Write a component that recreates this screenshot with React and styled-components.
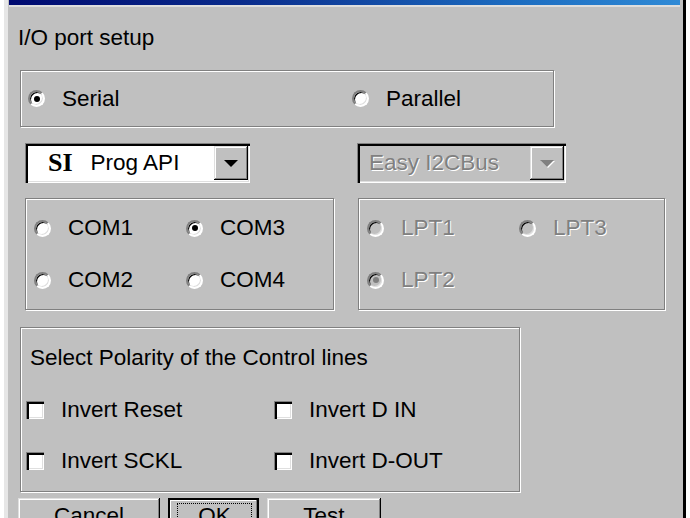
import React from 'react';
import styled, { createGlobalStyle } from 'styled-components';

const GlobalStyle = createGlobalStyle`
  html, body {
    margin: 0;
    padding: 0;
    background: #fff;
  }
  body {
    font-family: "Liberation Sans", Arial, sans-serif;
    font-size: 22.5px;
    color: #000;
  }
`;

const raised = `
  box-shadow: inset -1px -1px #000, inset 1px 1px #dfdfdf,
    inset -2px -2px #808080, inset 2px 2px #fff;
`;

const sunken = `
  box-shadow: inset 1px 1px #808080, inset 3px 3px #000,
    inset -1px -1px #fff, inset -2px -2px #dfdfdf;
`;

const Window = styled.div`
  box-sizing: border-box;
  width: 682px;
  height: 518px;
  margin-left: 4px;
  background: #c0c0c0;
  border-left: 4px solid #e6e6e6;
  border-right: 3px solid #000;
  display: flex;
  flex-direction: column;
  overflow: hidden;
`;

const TitleBar = styled.div`
  flex: none;
  height: 5px;
  margin: 0 3px 0 1px;
  background: linear-gradient(90deg, #000a70 0%, #0a2c8c 35%, #1c6cc0 75%, #2f8ad6 100%);
  border-bottom: 2px solid #dedede;
`;

const Body = styled.div`
  flex: none;
  padding-left: 10px;
  display: flex;
  flex-direction: column;
  align-items: flex-start;
`;

const Caption = styled.div`
  line-height: 26px;
  margin-top: 18px;
  white-space: nowrap;
`;

const Group = styled.div`
  box-sizing: border-box;
  border: 1px solid #808080;
  box-shadow: inset 1px 1px #fff, 1px 1px #fff;
`;

const ModeGroup = styled(Group)`
  width: 534px;
  height: 57px;
  margin: 19px 0 0 2px;
  padding-left: 7px;
  display: grid;
  grid-template-columns: 324px 1fr;
  align-items: center;
`;

const PortArea = styled.div`
  display: grid;
  grid-template-columns: 309px 307px;
  column-gap: 24px;
  row-gap: 15px;
  margin: 16px 0 0 7px;
`;

const Combo = styled.div`
  box-sizing: border-box;
  width: ${p => p.$width}px;
  height: 40px;
  margin-left: ${p => (p.$disabled ? -1 : 0)}px;
  padding: 3px 2px 3px 3px;
  display: flex;
  align-items: center;
  background: ${p => (p.$disabled ? '#c0c0c0' : '#fff')};
  ${sunken}
`;

const Logo = styled.span`
  font-family: "Liberation Serif", "Times New Roman", serif;
  font-weight: bold;
  font-size: 26px;
  margin-left: 20px;
  margin-right: 18px;
`;

const ComboText = styled.span`
  white-space: nowrap;
  padding-left: ${p => (p.$disabled ? 9 : 0)}px;
  color: ${p => (p.$disabled ? '#808080' : '#000')};
  text-shadow: ${p => (p.$disabled ? '1px 1px #fff' : 'none')};
`;

const DropButton = styled.div`
  box-sizing: border-box;
  width: 34px;
  height: 100%;
  margin-left: auto;
  background: #c0c0c0;
  display: flex;
  align-items: center;
  justify-content: center;
  ${raised}
`;

const Arrow = styled.span`
  width: 0;
  height: 0;
  border-left: 7px solid transparent;
  border-right: 7px solid transparent;
  border-top: 7px solid ${p => (p.$disabled ? '#808080' : '#000')};
  filter: ${p => (p.$disabled ? 'drop-shadow(1px 1px 0 #fff)' : 'none')};
`;

const PortGroup = styled(Group)`
  height: 112px;
  padding-left: 8px;
  display: grid;
  grid-template-columns: 152px 1fr;
  grid-auto-rows: 52px;
  align-content: center;
  align-items: center;
`;

const Choice = styled.label`
  display: flex;
  align-items: center;
  gap: 17px;
  line-height: 26px;
  white-space: nowrap;
  color: ${p => (p.$disabled ? '#808080' : '#000')};
  text-shadow: ${p => (p.$disabled ? '1px 1px #fff' : 'none')};
`;

const RadioMark = styled.span`
  box-sizing: border-box;
  flex: none;
  width: 17px;
  height: 17px;
  border-radius: 50%;
  border: 2px solid;
  border-color: #808080 #fff #fff #808080;
  box-shadow: inset 1px 1px #000, inset -1px -1px #dfdfdf;
  background: ${p => (p.$disabled ? '#c0c0c0' : '#fff')};
  display: flex;
  align-items: center;
  justify-content: center;

  &::after {
    content: '';
    display: ${p => (p.$checked ? 'block' : 'none')};
    width: 6px;
    height: 6px;
    border-radius: 50%;
    background: ${p => (p.$disabled ? '#808080' : '#000')};
  }
`;

const PolarityGroup = styled(Group)`
  width: 500px;
  height: 165px;
  margin: 17px 0 0 2px;
  padding: 17px 0 0 5px;
  display: flex;
  flex-direction: column;
`;

const PolarityCaption = styled.div`
  line-height: 26px;
  margin-left: 4px;
  white-space: nowrap;
`;

const CheckGrid = styled.div`
  display: grid;
  grid-template-columns: 248px auto;
  grid-auto-rows: 51px;
  align-items: center;
  margin-top: 13px;
`;

const CheckMark = styled.span`
  box-sizing: border-box;
  flex: none;
  width: 18px;
  height: 18px;
  background: #fff;
  ${sunken}
`;

const ButtonRow = styled.div`
  display: flex;
  gap: 8px;
  margin-top: 6px;
`;

const Button = styled.button`
  box-sizing: border-box;
  flex: none;
  width: ${p => p.$width}px;
  height: 36px;
  padding: ${p => (p.$default ? '5px 7px 5px 9px' : '0')};
  border: none;
  background: #c0c0c0;
  font: inherit;
  color: #000;
  display: flex;
  align-items: stretch;
  justify-content: center;
  ${p =>
    p.$default
      ? `box-shadow: inset 0 0 0 2px #000, inset -3px -3px #808080, inset 3px 3px #fff;`
      : raised}
`;

const ButtonLabel = styled.span`
  flex: 1;
  display: flex;
  align-items: center;
  justify-content: center;
  border: 1px dotted ${p => (p.$focused ? '#000' : 'transparent')};
`;

function Radio({ label, checked, disabled }) {
  return (
    <Choice $disabled={disabled}>
      <RadioMark $checked={checked} $disabled={disabled} />
      {label}
    </Choice>
  );
}

function Check({ label }) {
  return (
    <Choice>
      <CheckMark />
      {label}
    </Choice>
  );
}

export default function App() {
  return (
    <>
      <GlobalStyle />
      <Window>
        <TitleBar />
        <Body>
          <Caption>I/O port setup</Caption>

          <ModeGroup>
            <Radio label="Serial" checked />
            <Radio label="Parallel" />
          </ModeGroup>

          <PortArea>
            <Combo $width={225}>
              <Logo>SI</Logo>
              <ComboText>Prog API</ComboText>
              <DropButton>
                <Arrow />
              </DropButton>
            </Combo>
            <Combo $width={209} $disabled>
              <ComboText $disabled>Easy I2CBus</ComboText>
              <DropButton>
                <Arrow $disabled />
              </DropButton>
            </Combo>

            <PortGroup>
              <Radio label="COM1" />
              <Radio label="COM3" checked />
              <Radio label="COM2" />
              <Radio label="COM4" />
            </PortGroup>
            <PortGroup>
              <Radio label="LPT1" disabled />
              <Radio label="LPT3" disabled />
              <Radio label="LPT2" checked disabled />
            </PortGroup>
          </PortArea>

          <PolarityGroup>
            <PolarityCaption>Select Polarity of the Control lines</PolarityCaption>
            <CheckGrid>
              <Check label="Invert Reset" />
              <Check label="Invert D IN" />
              <Check label="Invert SCKL" />
              <Check label="Invert D-OUT" />
            </CheckGrid>
          </PolarityGroup>

          <ButtonRow>
            <Button $width={142}>
              <ButtonLabel>Cancel</ButtonLabel>
            </Button>
            <Button $width={91} $default>
              <ButtonLabel $focused>OK</ButtonLabel>
            </Button>
            <Button $width={114}>
              <ButtonLabel>Test</ButtonLabel>
            </Button>
          </ButtonRow>
        </Body>
      </Window>
    </>
  );
}
